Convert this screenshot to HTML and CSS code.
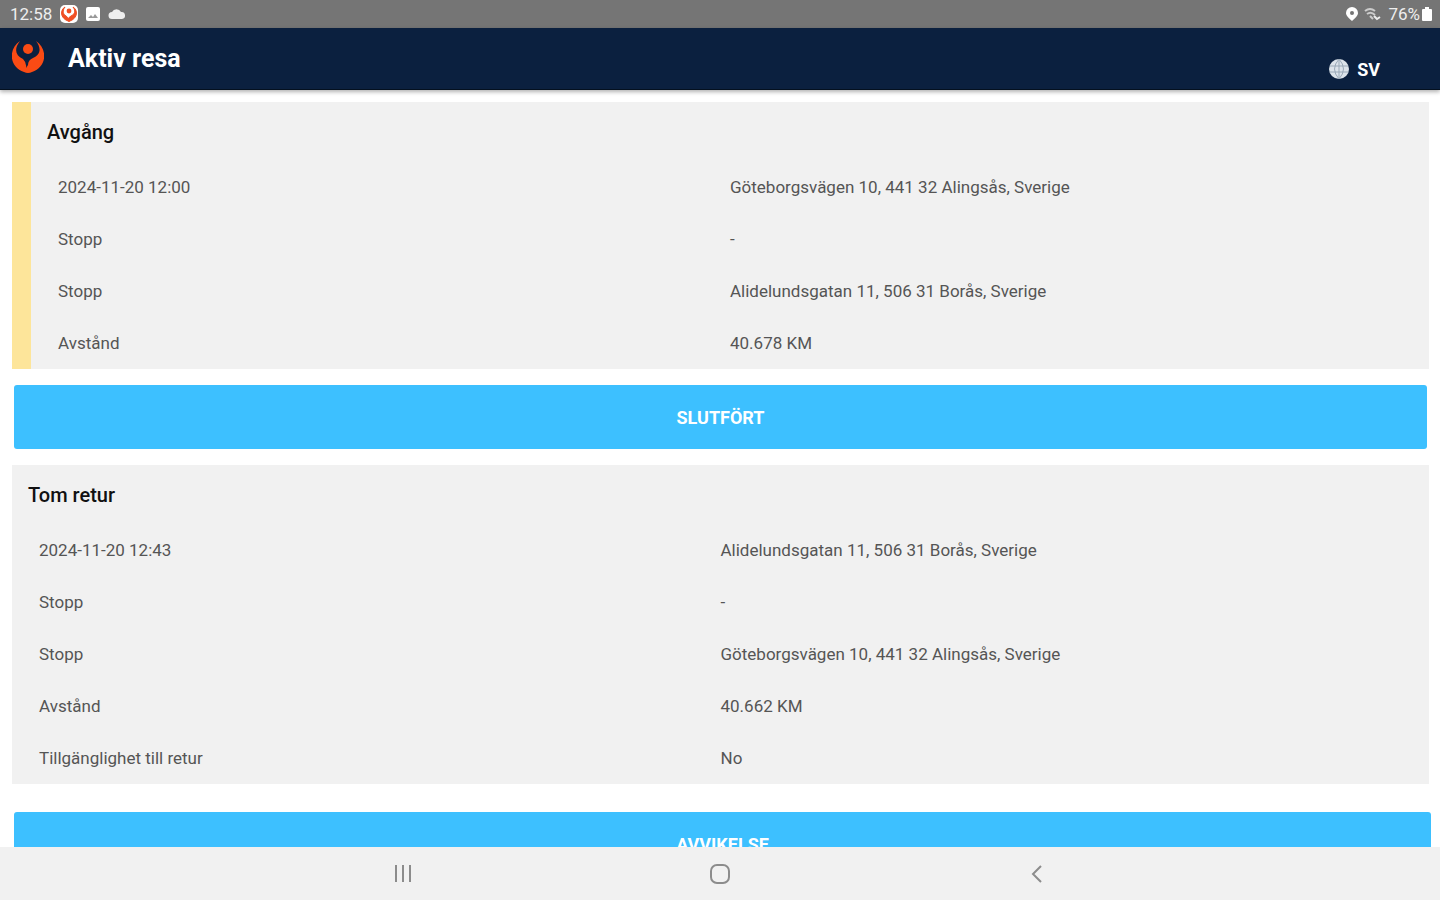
FILE: index.html
```html
<!DOCTYPE html>
<html lang="sv">
<head>
<meta charset="utf-8">
<meta name="viewport" content="width=device-width, initial-scale=1">
<title>Aktiv resa</title>
<link rel="stylesheet" href="styles.css">
</head>
<body>
<div class="status">
	<div class="status-left">
		<span>12:58</span>
		<svg width="18" height="18" viewBox="0 0 18 18">
			<rect width="18" height="18" rx="5" fill="#fff"/>
			<path d="M5 2C0 5 0 13 8 16Q9 17 10 16C18 13 18 5 13 2C16 6 15 9 11 11Q9 12 8 14Q8 12 6 11C3 9 2 6 5 2Z" fill="#f04e23" stroke="#f04e23"/>
			<circle cx="9" cy="6" r="2.4" fill="#f04e23"/>
		</svg>
		<svg width="14" height="14" viewBox="0 0 14 14">
			<rect width="14" height="14" rx="2" fill="#fff"/>
			<path d="M2 11l3-3 2 2 2-3 3 4z" fill="#999"/>
		</svg>
		<svg width="18" height="12" viewBox="0 0 18 12">
			<path d="M4 11a3.5 3.5 0 0 1 0-7 5 5 0 0 1 9 0 3.5 3.500 0 0 1 1 7z" fill="#eee"/>
		</svg>
	</div>
	<div class="status-right">
		<svg width="12" height="14" viewBox="0 0 12 14">
			<path d="M6 0a6 6 0 0 1 6 6c0 3-3 5-6 8C3 11 0 9 0 6a6 6 0 0 1 6-6z" fill="#fff"/>
			<circle cx="6" cy="6" r="2" fill="#757575"/>
		</svg>
		<svg width="18" height="14" viewBox="0 0 18 14">
			<path d="M1 4q5-4 10 0M3 7q4-3 8 1M6 9l3 3" fill="none" stroke="#ccc" stroke-width="2"/>
			<path d="M10 9l3 3 3-2" fill="none" stroke="#eee" stroke-width="2"/>
		</svg>
		<span class="battery">76%
			<svg width="10" height="14" viewBox="0 0 10 14">
				<path d="M3 0h4v2h2q1 0 1 1v10q0 1-1 1H1q-1 0-1-1V3q0-1 1-1h2z" fill="#fff"/>
			</svg>
		</span>
	</div>
</div>

<header class="bar">
	<svg class="logo" width="32" height="34" viewBox="0 0 32 34">
		<path d="M8 1C-4 9-3 27 12 32Q16 34 20 32C35 27 36 9 24 1C30 9 28 15 21 18Q16 20 16 25L14 28Q15 23 11 19C3 15 2 9 8 1Z" fill="#fa4b14"/>
		<circle cx="16" cy="9" r="5" fill="#fa4b14"/>
	</svg>
	<h1>Aktiv resa</h1>
	<button class="lang" type="button">
		<svg width="20" height="20" viewBox="0 0 20 20">
			<circle cx="10" cy="10" r="10" fill="#dce3ea"/>
			<path d="M1 7h18M1 13h18M10 0v20M10 0q-9 10 0 20M10 0q9 10 0 20" fill="none" stroke="#9aa9b8"/>
		</svg>
		SV
	</button>
</header>

<main>
	<section class="card active">
		<h2>Avgång</h2>
		<table>
			<tr><th scope="row">2024-11-20 12:00</th><td>Göteborgsvägen 10, 441 32 Alingsås, Sverige</td></tr>
			<tr><th scope="row">Stopp</th><td>-</td></tr>
			<tr><th scope="row">Stopp</th><td>Alidelundsgatan 11, 506 31 Borås, Sverige</td></tr>
			<tr><th scope="row">Avstånd</th><td>40.678 KM</td></tr>
		</table>
	</section>
	<button class="btn" type="button">SLUTFÖRT</button>
	<section class="card">
		<h2>Tom retur</h2>
		<table>
			<tr><th scope="row">2024-11-20 12:43</th><td>Alidelundsgatan 11, 506 31 Borås, Sverige</td></tr>
			<tr><th scope="row">Stopp</th><td>-</td></tr>
			<tr><th scope="row">Stopp</th><td>Göteborgsvägen 10, 441 32 Alingsås, Sverige</td></tr>
			<tr><th scope="row">Avstånd</th><td>40.662 KM</td></tr>
			<tr><th scope="row">Tillgänglighet till retur</th><td>No</td></tr>
		</table>
	</section>
	<button class="btn btn-last" type="button">AVVIKELSE</button>
</main>

<nav class="keys">
	<button type="button" aria-label="Senaste appar">
		<svg width="20" height="20" viewBox="0 0 20 20"><path d="M3 1v17M10 1v17M17 1v17" fill="none" stroke="#8c8c8c" stroke-width="2"/></svg>
	</button>
	<button type="button" aria-label="Hem">
		<svg width="20" height="20" viewBox="0 0 20 20"><rect x="1" y="1" width="18" height="18" rx="6" fill="none" stroke="#8c8c8c" stroke-width="2"/></svg>
	</button>
	<button type="button" aria-label="Tillbaka">
		<svg width="20" height="20" viewBox="0 0 20 20"><path d="M14 2L6 10l8 8" fill="none" stroke="#8c8c8c" stroke-width="2"/></svg>
	</button>
</nav>
</body>
</html>
```
FILE: styles.css
```css
* {
	box-sizing: border-box;
}
body {
	display: flex;
	flex-direction: column;
	height: 100vh;
	margin: 0;
	background: #fff;
	color: #555;
	font-family: Roboto, sans-serif;
	font-size: 17px;
}
h1, h2 {
	margin: 0;
}
button {
	border: 0;
	padding: 0;
	font-family: inherit;
	cursor: pointer;
}
svg {
	flex: none;
}

/* system status bar */
.status {
	display: flex;
	justify-content: space-between;
	flex: none;
	height: 28px;
	padding: 0 8px 0 10px;
	background: #757575;
	color: #eee;
}
.status-left,
.status-right,
.battery {
	display: flex;
	align-items: center;
	gap: 8px;
}
.status-right {
	gap: 6px;
}
.battery {
	gap: 2px;
}

.bar {
	display: flex;
	align-items: center;
	flex: none;
	height: 62px;
	padding: 0 60px 0 12px;
	background: #0b203f;
	color: #fff;
	border-bottom: 1px solid #04101f;
	box-shadow: 0 2px 4px rgba(0, 0, 0, 0.3);
	z-index: 1;
}
.bar h1 {
	margin-left: 24px;
	font-size: 25px;
	line-height: 32px;
}
.logo {
	margin-bottom: 4px;
}
.lang {
	display: flex;
	align-items: center;
	align-self: flex-end;
	gap: 8px;
	height: 40px;
	margin-left: auto;
	background: none;
	color: #fff;
	font-size: 18px;
	font-weight: bold;
}

main {
	flex: 1;
	min-height: 0;
	overflow-y: auto;
	scrollbar-width: none;
	padding: 12px 11px 0 12px;
}
.card {
	background: #f1f1f1;
}
.active {
	border-left: 19px solid #fde59a;
}
.card h2 {
	padding: 16px 16px 15px;
	color: #111;
	font-size: 20px;
	font-weight: 500;
	line-height: 28px;
}
table {
	width: 100%;
	border-collapse: collapse;
	table-layout: fixed;
}
th, td {
	height: 52px;
	padding: 0;
	font-weight: normal;
	text-align: left;
}
th {
	padding-left: 27px;
}
.btn {
	display: block;
	width: calc(100% - 4px);
	height: 64px;
	margin: 16px 2px;
	border-radius: 3px;
	background: #3dc0ff;
	color: #fff;
	font-size: 18px;
	font-weight: bold;
}
.btn-last {
	width: 100%;
	margin: 28px 2px 16px;
}

/* system navigation keys */
.keys {
	display: grid;
	grid-template-columns: repeat(3, 22%);
	justify-content: center;
	flex: none;
	height: 53px;
	background: #f1f1f1;
}
.keys button {
	display: flex;
	align-items: center;
	justify-content: center;
	background: none;
}
```
